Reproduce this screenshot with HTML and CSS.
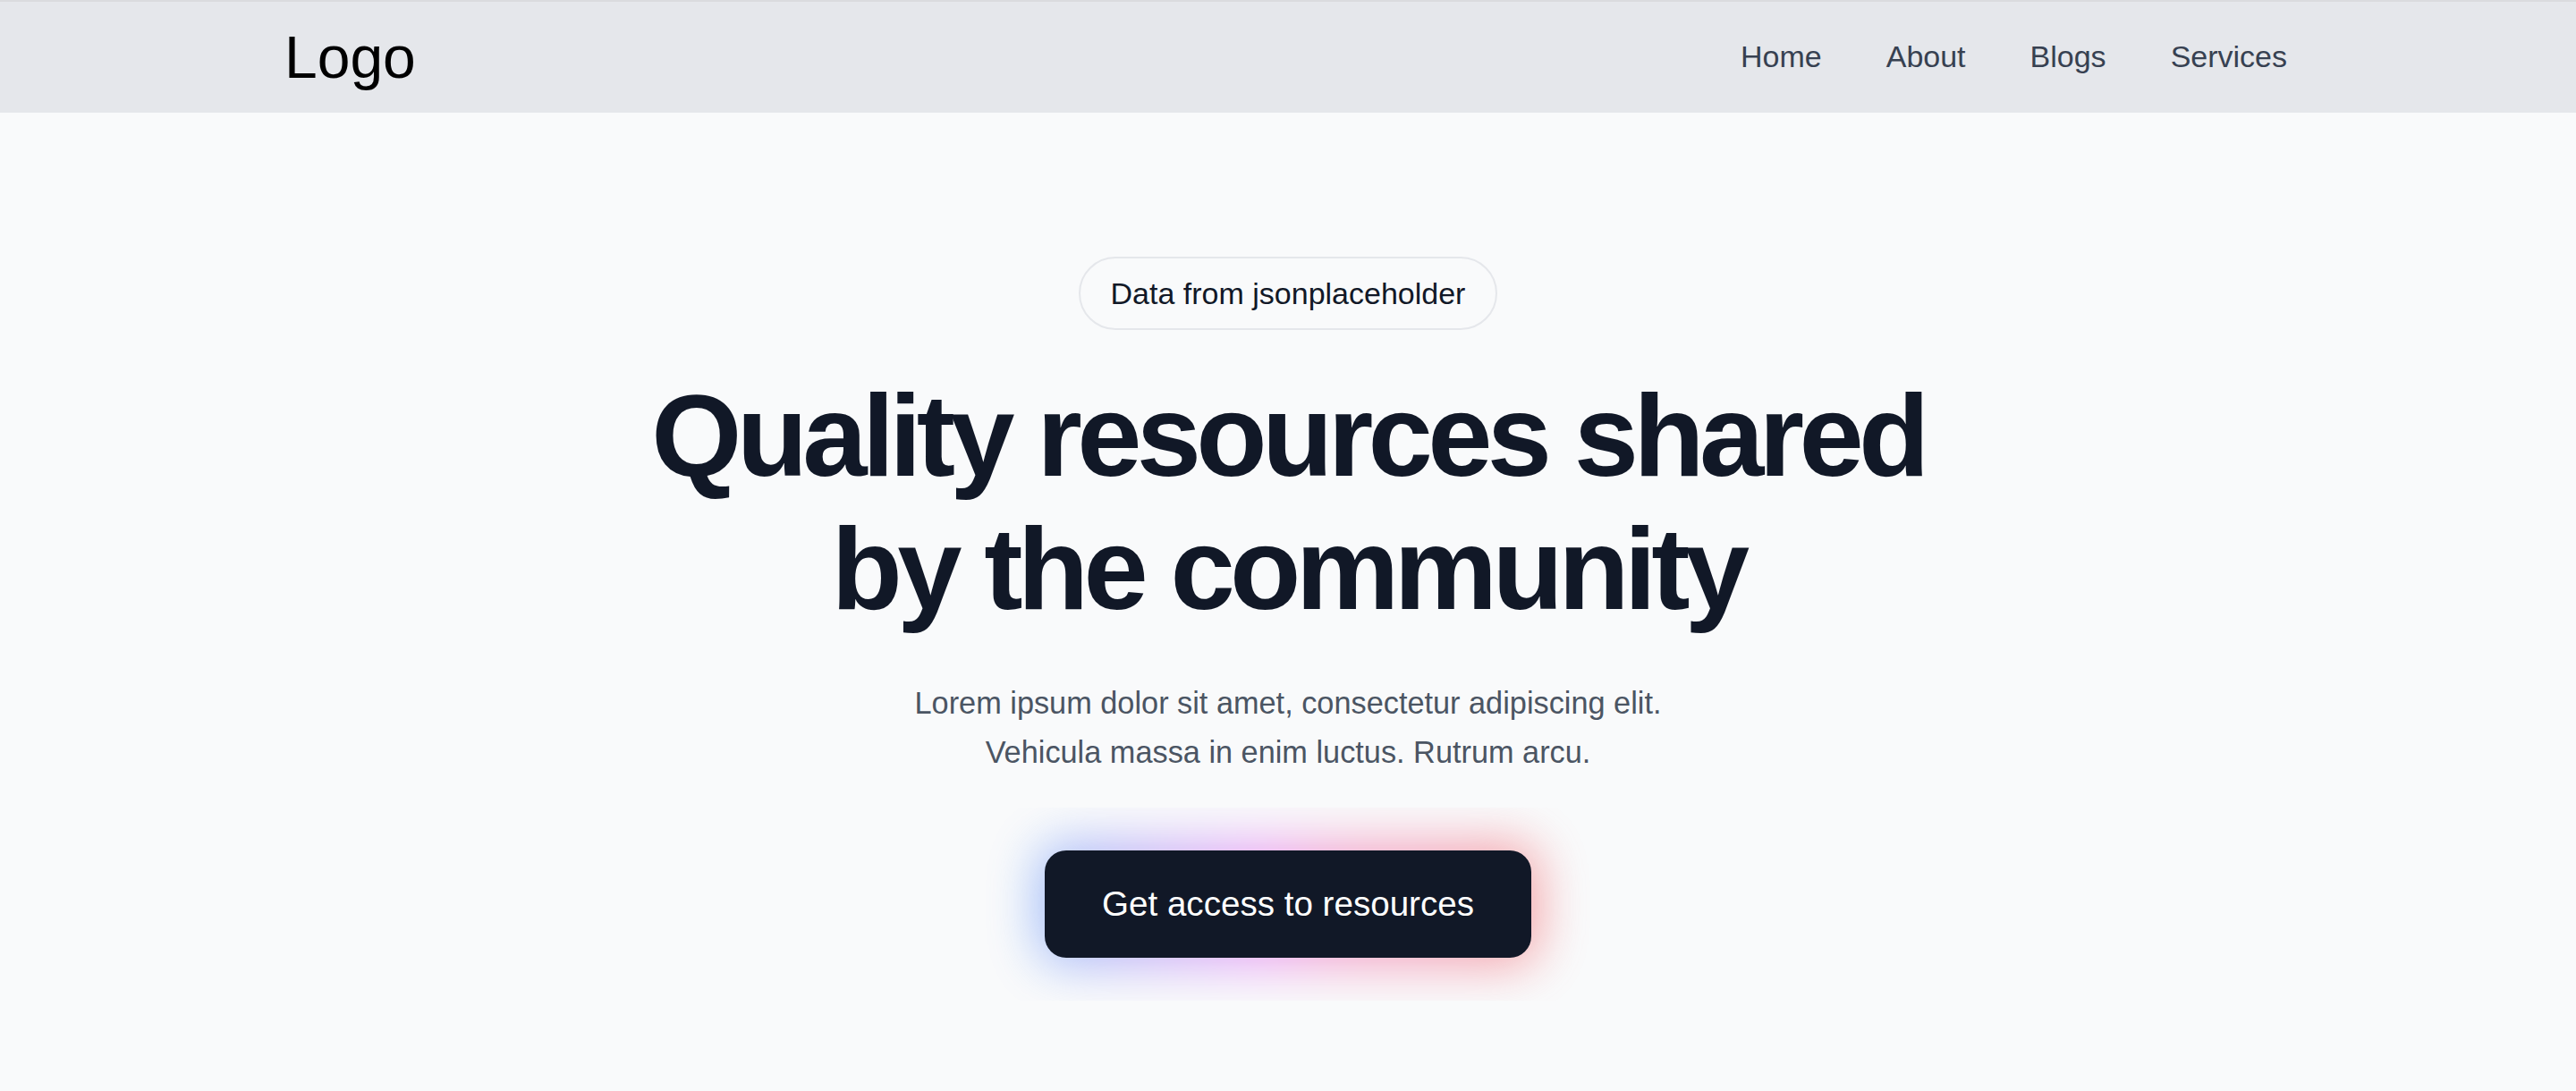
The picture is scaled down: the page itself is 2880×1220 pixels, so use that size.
FILE: index.html
```html
<!DOCTYPE html>
<html lang="en">
<head>
<meta charset="utf-8">
<title>Quality resources</title>
<link rel="stylesheet" href="styles.css">
</head>
<body>
<header class="site-header">
  <div class="nav-bar">
    <a class="logo" href="#">Logo</a>
    <nav class="nav-links">
      <a href="#">Home</a>
      <a href="#">About</a>
      <a href="#">Blogs</a>
      <a href="#">Services</a>
    </nav>
  </div>
</header>
<main class="hero">
  <span class="badge">Data from jsonplaceholder</span>
  <h1 class="hero-title">Quality resources shared<br>by the community</h1>
  <p class="hero-text">Lorem ipsum dolor sit amet, consectetur adipiscing elit.<br>Vehicula massa in enim luctus. Rutrum arcu.</p>
  <div class="cta">
    <div class="cta-glow"></div>
    <a class="cta-button" href="#">Get access to resources</a>
  </div>
</main>
</body>
</html>
```

FILE: styles.css
```css
* { box-sizing: border-box; }
html, body { margin: 0; padding: 0; }
body {
  background: #f9fafb;
  font-family: "Liberation Sans", Arial, Helvetica, sans-serif;
  color: #111827;
  min-height: 1220px;
}
a { text-decoration: none; color: inherit; }

.site-header {
  background: #e5e7eb;
  border-top: 2px solid #dadbde;
  height: 126px;
}
.nav-bar {
  height: 124px;
  padding: 0 323px 0 318px;
  display: flex;
  align-items: center;
  justify-content: space-between;
}
.logo {
  font-size: 66px;
  color: #000;
  line-height: 1;
}
.nav-links {
  display: flex;
  gap: 72px;
  margin-top: -2px;
}
.nav-links a {
  font-size: 34px;
  color: #374151;
  line-height: 1;
}

.hero {
  display: flex;
  flex-direction: column;
  align-items: center;
  padding-top: 161px;
  text-align: center;
}
.badge {
  display: inline-block;
  border: 2px solid #e5e7eb;
  border-radius: 999px;
  padding: 18px 34px;
  font-size: 34px;
  line-height: 42px;
  color: #111827;
}
.hero-title {
  margin: 44px 0 0;
  font-size: 130px;
  line-height: 149px;
  font-weight: 700;
  letter-spacing: -0.044em;
  color: #111827;
}
.hero-text {
  margin: 48px 0 0;
  font-size: 34.3px;
  line-height: 55px;
  color: #4b5563;
}
.cta {
  position: relative;
  margin-top: 34px;
  padding: 48px 66px;
  overflow: hidden;
}
.cta-glow {
  position: absolute;
  top: 40px; bottom: 40px; left: 58px; right: 58px;
  border-radius: 30px;
  background: linear-gradient(90deg, #3b82f6, #d946ef 45%, #ec4899 60%, #ef4444);
  filter: blur(28px);
  opacity: 0.48;
}
.cta-button {
  position: relative;
  display: block;
  background: #111827;
  color: #fff;
  border-radius: 24px;
  padding: 36px 64px;
  font-size: 38.6px;
  line-height: 48px;
}
```
